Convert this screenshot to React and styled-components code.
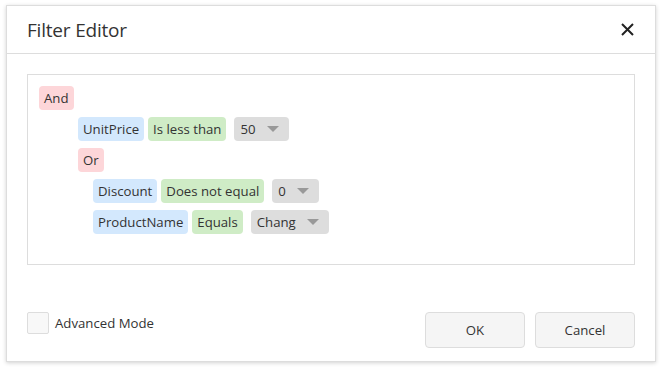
import React from 'react';
import styled, { createGlobalStyle } from 'styled-components';

const GlobalStyle = createGlobalStyle`
  html, body {
    margin: 0;
    padding: 0;
    background: #fff;
  }
  body {
    font-family: "Segoe UI", "Open Sans", "Noto Sans", sans-serif;
    color: #333;
  }
`;

const Page = styled.div`
  padding: 5px 6px;
`;

const Dialog = styled.div`
  width: 650px;
  height: 357px;
  box-sizing: border-box;
  border: 1px solid #ddd;
  box-shadow: 0 1px 4px rgba(0, 0, 0, 0.18);
  background: #fff;
  display: flex;
  flex-direction: column;
`;

const Header = styled.div`
  height: 47px;
  border-bottom: 1px solid #ddd;
  display: flex;
  align-items: center;
  justify-content: space-between;
  padding: 0 20px 0 20px;
`;

const Title = styled.div`
  font-size: 19px;
  color: #333;
  letter-spacing: -0.2px;
`;

const CloseButton = styled.div`
  width: 16px;
  height: 16px;
  display: flex;
  align-items: center;
  justify-content: center;
  cursor: pointer;
`;

const Body = styled.div`
  padding: 20px 20px 0 20px;
`;

const FilterBox = styled.div`
  height: 191px;
  box-sizing: border-box;
  border: 1px solid #ddd;
  padding: 11px;
  display: flex;
  flex-direction: column;
  gap: 7px;
`;

const Row = styled.div`
  display: flex;
  align-items: center;
  margin-left: ${(p) => p.$indent}px;
`;

const chipColors = {
  group: '#fdd6d9',
  field: '#d3e8fd',
  op: '#cfecc6',
  value: '#dddddd',
};

const Chip = styled.div`
  height: 24px;
  box-sizing: border-box;
  padding: 0 5px;
  border-radius: 4px;
  background: ${(p) => chipColors[p.$kind]};
  font-size: 13.2px;
  display: flex;
  align-items: center;
  white-space: nowrap;
  & + & {
    margin-left: 4px;
  }
`;

const ValueChip = styled(Chip)`
  padding: 0 10px 0 6px;
  gap: 11px;
  && {
    margin-left: 8px;
  }
`;

const Arrow = styled.span`
  width: 0;
  height: 0;
  border-left: 6px solid transparent;
  border-right: 6px solid transparent;
  border-top: 6px solid #999;
`;

const Footer = styled.div`
  display: flex;
  align-items: flex-start;
  justify-content: space-between;
  padding: 47px 20px 0 20px;
`;

const CheckLabel = styled.label`
  display: flex;
  align-items: center;
  gap: 6px;
  font-size: 13.2px;
  color: #333;
`;

const CheckBox = styled.span`
  width: 22px;
  height: 22px;
  box-sizing: border-box;
  border: 1px solid #ddd;
  border-radius: 2px;
  background: #f8f8f8;
`;

const Buttons = styled.div`
  display: flex;
  gap: 10px;
`;

const Button = styled.button`
  width: 100px;
  height: 36px;
  border: 1px solid #ddd;
  border-radius: 4px;
  background: #f5f5f5;
  font-family: inherit;
  font-size: 13.2px;
  color: #333;
  cursor: pointer;
`;

const Value = ({ children }) => (
  <ValueChip $kind="value">
    {children}
    <Arrow />
  </ValueChip>
);

export default function App() {
  return (
    <>
      <GlobalStyle />
      <Page>
        <Dialog>
          <Header>
            <Title>Filter Editor</Title>
            <CloseButton>
              <svg width="13" height="13" viewBox="0 0 13 13">
                <path d="M1 1L12 12M12 1L1 12" stroke="#222" strokeWidth="2" />
              </svg>
            </CloseButton>
          </Header>
          <Body>
            <FilterBox>
              <Row $indent={0}>
                <Chip $kind="group">And</Chip>
              </Row>
              <Row $indent={39}>
                <Chip $kind="field">UnitPrice</Chip>
                <Chip $kind="op">Is less than</Chip>
                <Value>50</Value>
              </Row>
              <Row $indent={39}>
                <Chip $kind="group">Or</Chip>
              </Row>
              <Row $indent={54}>
                <Chip $kind="field">Discount</Chip>
                <Chip $kind="op">Does not equal</Chip>
                <Value>0</Value>
              </Row>
              <Row $indent={54}>
                <Chip $kind="field">ProductName</Chip>
                <Chip $kind="op">Equals</Chip>
                <Value>Chang</Value>
              </Row>
            </FilterBox>
          </Body>
          <Footer>
            <CheckLabel>
              <CheckBox />
              Advanced Mode
            </CheckLabel>
            <Buttons>
              <Button>OK</Button>
              <Button>Cancel</Button>
            </Buttons>
          </Footer>
        </Dialog>
      </Page>
    </>
  );
}
